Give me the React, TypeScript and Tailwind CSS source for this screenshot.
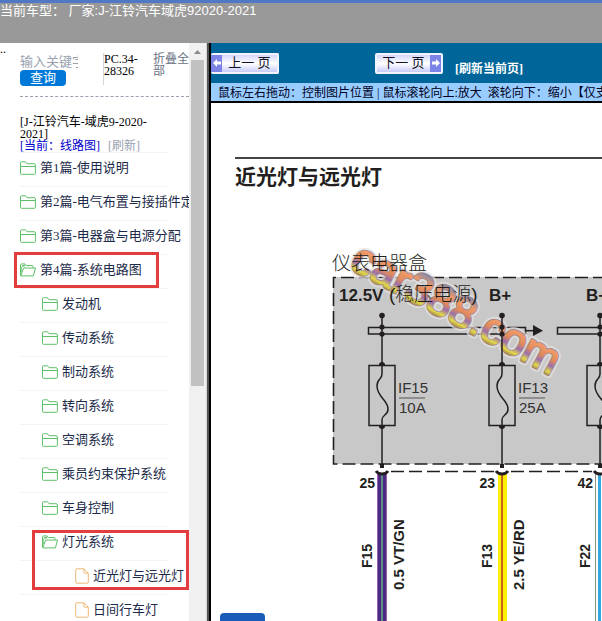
import { clsx } from "clsx";
import type { ReactNode } from "react";

type TreeNode = {
  label: string;
  kind?: "folder" | "file";
  open?: boolean;
  children?: TreeNode[];
};

const tree: TreeNode[] = [
  { label: "第1篇-使用说明" },
  { label: "第2篇-电气布置与接插件定" },
  { label: "第3篇-电器盒与电源分配" },
  {
    label: "第4篇-系统电路图",
    open: true,
    children: [
      { label: "发动机" },
      { label: "传动系统" },
      { label: "制动系统" },
      { label: "转向系统" },
      { label: "空调系统" },
      { label: "乘员约束保护系统" },
      { label: "车身控制" },
      {
        label: "灯光系统",
        open: true,
        children: [
          { label: "近光灯与远光灯", kind: "file" },
          { label: "日间行车灯", kind: "file" },
        ],
      },
    ],
  },
];

const indents = ["pl-0", "pl-[22px]", "pl-[55px]"];

function FolderIcon({ open }: { open?: boolean }) {
  return (
    <svg width="16" height="14" viewBox="0 0 16 14" fill="none" stroke="#5fc06a">
      {open ? (
        <>
          <path d="M.5 12.5V2Q.5.9 1.6.9H5l1.4 1.6H12q1 0 1 1V5" />
          <path d="M.8 12.9 3.6 5H15.5l-2.1 7.9Z" strokeLinejoin="round" />
          <path d="M1 9V3.5M2 3l3-.5" strokeWidth="1.4" />
        </>
      ) : (
        <>
          <path d="M.5 12.4V1.8Q.5.8 1.5.8H5.6L7 2.7h7q1.4 0 1.4 1.2v8.5q0 .9-1 .9H1.5q-1 0-1-.9Z" />
          <path d="M.5 5.5h15" />
        </>
      )}
    </svg>
  );
}

function FileIcon() {
  return (
    <svg width="14" height="16" viewBox="0 0 14 16" fill="none" stroke="#f0b878">
      <path d="M8.8.8H2Q.7.8.7 2v12q0 1.2 1.3 1.2h10q1.3 0 1.3-1.2V5.2Z" />
      <path d="M8.8.8V4q0 1.2 1.2 1.2h3.3" />
    </svg>
  );
}

function TreeItem({ node, level }: { node: TreeNode; level: number }) {
  const isGroup = level === 1 && node.open;
  return (
    <li className="relative">
      <a
        href="#"
        className={clsx(
          "flex h-[34px] w-[149px] items-center gap-1 border-t border-gray-100 pb-1 text-[13px] leading-4 whitespace-nowrap text-[#1c2b4a]",
          indents[level]
        )}
      >
        <span className="shrink-0">
          {node.kind === "file" ? <FileIcon /> : <FolderIcon open={node.open} />}
        </span>
        <span>{node.label}</span>
      </a>
      {level === 0 && node.open && (
        <span className="pointer-events-none absolute -top-0.5 -left-1.5 h-9 w-[145px] border-3 border-[#e33e3e]" />
      )}
      {isGroup && (
        <span className="pointer-events-none absolute top-1 left-3 z-10 h-[60px] w-[157px] border-3 border-[#e33e3e]" />
      )}
      {node.children && (
        <ul>
          {node.children.map((child) => (
            <TreeItem key={child.label} node={child} level={level + 1} />
          ))}
        </ul>
      )}
    </li>
  );
}

function Sidebar() {
  return (
    <aside className="flex shrink-0">
      <div className="flex w-[189px] overflow-hidden">
        <span className="w-5 shrink-0 text-xs leading-3">..</span>
        <div className="w-[169px] shrink-0">
          <form className="flex items-start border-b border-dashed border-gray-400 py-[10px]">
            <div className="w-[83px]">
              <input
                aria-label="输入关键字"
                placeholder="输入关键字"
                className="block h-[17px] w-[58px] text-[13px] placeholder:text-gray-400"
              />
              <button
                type="button"
                className="block h-4 w-[46px] rounded bg-[#0078d7] text-[13px] leading-4 text-white"
              >
                查询
              </button>
            </div>
            <div className="h-8 w-[50px] border-l border-gray-300 text-xs leading-3">
              PC.34-
              <br />
              28326
            </div>
            <a href="#" className="w-9 text-xs leading-3 text-gray-500">
              折叠全部
            </a>
          </form>
          <div className="pt-[19px] text-xs leading-3">
            <p>
              [J-江铃汽车-域虎9-2020-
              <br />
              2021]
            </p>
            <p className="flex gap-2">
              <a href="#" className="text-[#0000cc]">
                [当前：线路图]
              </a>
              <a href="#" className="text-gray-400">
                [刷新]
              </a>
            </p>
          </div>
          <ul>
            {tree.map((node) => (
              <TreeItem key={node.label} node={node} level={0} />
            ))}
          </ul>
        </div>
      </div>
      <div className="flex w-[17px] flex-col items-center bg-[#f0f0f0]">
        <div className="flex h-[17px] items-center">
          <svg width="7" height="4" viewBox="0 0 7 4" fill="#8a8a8a">
            <path d="M3.5 0 7 4H0Z" />
          </svg>
        </div>
        <div className="h-[326px] w-[13px] bg-[#c1c1c1]" />
      </div>
      <div className="w-[5px] border-r-2 border-l border-l-gray-300 border-r-black bg-[#555]" />
    </aside>
  );
}

function PageArrow({ back }: { back?: boolean }) {
  return (
    <span className="flex h-full w-[11px] items-center justify-center bg-[#7b83e6]">
      <svg width="8" height="8" viewBox="0 0 8 8" fill="white">
        {back ? <path d="M0 4 4 0V2.6H8V5.4H4V8Z" /> : <path d="M8 4 4 0V2.6H0V5.4H4V8Z" />}
      </svg>
    </span>
  );
}

function PageButton({ back, children }: { back?: boolean; children: ReactNode }) {
  return (
    <button
      type="button"
      className={clsx(
        "flex h-[21px] w-[68px] items-center rounded-xs border-[#f3f3ff] bg-linear-to-b from-[#d5d7fa] via-white to-[#c9ccf8] text-[13px] text-[#111122]",
        back ? "border-y-2 border-r-2" : "border-2"
      )}
    >
      {back && <PageArrow back />}
      <span className="flex-1">{children}</span>
      {!back && <PageArrow />}
    </button>
  );
}

function Fuse({ x, name, amps }: { x: number; name: string; amps: string }) {
  return (
    <g>
      <path
        d={`M${x} 315V366M${x} 425V468M${x} 365V374C${x} 380 ${x - 5} 378 ${x - 5} 386C${x - 5} 397 ${x + 6} 400 ${x + 6} 409C${x + 6} 416 ${x} 414 ${x} 420V426`}
        fill="none"
        stroke="#231f20"
        strokeWidth="1.5"
      />
      <rect x={x - 13} y="365.5" width="26" height="60" fill="none" stroke="#231f20" strokeWidth="1.5" />
      <circle cx={x} cy="315.5" r="2.8" />
      <circle cx={x} cy="327" r="2.6" />
      <circle cx={x} cy="334" r="2.6" />
      <path d={`M${x - 3} 365a3 3 0 0 1 6 0ZM${x - 3} 426a3 3 0 0 0 6 0Z`} />
      <g fontSize="15" fill="#333">
        <text x={x + 16} y="393">{name}</text>
        <text x={x + 17} y="413">{amps}</text>
      </g>
      <path d={`M${x + 17} 398H${x + 43}`} stroke="#555" />
    </g>
  );
}

function Connector({ x, pin, wire, gauge }: { x: number; pin: string; wire: string; gauge: string }) {
  return (
    <g fontSize="14" fontWeight="bold">
      <path d={`M${x} 464V468`} stroke="#231f20" strokeWidth="4" />
      <path d={`M${x - 6} 471Q${x - 4} 474 ${x} 474T${x + 6} 471`} fill="none" stroke="#231f20" strokeWidth="3" />
      <text x={x - 7} y="488" textAnchor="end">{pin}</text>
      <text transform={`translate(${x - 10} 568) rotate(-90)`}>{wire}</text>
      <text transform={`translate(${x + 22} 590) rotate(-90)`} fontSize="15">{gauge}</text>
    </g>
  );
}

function Diagram() {
  return (
    <svg
      width="449"
      height="421"
      viewBox="211 200 449 421"
      className="block max-w-none"
      fill="#231f20"
      fontFamily="'Liberation Sans', 'Noto Sans CJK SC', sans-serif"
    >
      <defs>
        <linearGradient id="mark" gradientUnits="userSpaceOnUse" x1="0" y1="-31" x2="0" y2="2">
          <stop offset="0" stopColor="#8a8aa8" />
          <stop offset="0.25" stopColor="#f09a68" />
          <stop offset="0.5" stopColor="#e08a5c" />
          <stop offset="0.68" stopColor="#9a6fae" />
          <stop offset="0.86" stopColor="#e3da48" />
          <stop offset="1" stopColor="#9a7a58" />
        </linearGradient>
      </defs>

      <rect x="333" y="277" width="327" height="187" fill="#c8c8c8" />
      <path d="M660 277.500H333.500V464H660" fill="none" stroke="#231f20" strokeWidth="1.6" strokeDasharray="13 5" />
      <path d="M391 471.500H494M511 471.500H592" stroke="#231f20" strokeWidth="1.5" strokeDasharray="13 5" />

      <g fill="none" stroke="#231f20" strokeWidth="1.5">
        <rect x="368.500" y="327.500" width="157" height="6.500" />
        <path d="M660 327.500H557.500V334H660" />
        <path d="M526 330.700H535" />
      </g>
      <path d="M533 325 543 330.700 533 336Z" />

      {/* site watermark */}
      <g transform="translate(348 268) rotate(28)" fontSize="44" strokeLinejoin="round">
        <text stroke="#e6e2e2" strokeWidth="7" fill="none" opacity="0.7">
          car388.com
        </text>
        <text stroke="#8c7078" strokeWidth="3" fill="none" opacity="0.8">
          car388.com
        </text>
        <text fill="url(#mark)" stroke="url(#mark)" strokeWidth="1.5">
          car388.com
        </text>
      </g>

      <text x="332" y="270" fontSize="19" fontWeight="300">仪表电器盒</text>
      <g fontSize="17" fontWeight="bold">
        <text x="339" y="301">12.5V</text>
        <text x="489" y="301">B+</text>
        <text x="586" y="301">B+</text>
      </g>
      <text x="389" y="301" fontSize="19" fontWeight="300">(稳压电源)</text>

      <Fuse x={382} name="IF15" amps="10A" />
      <Fuse x={502} name="IF13" amps="25A" />
      <Fuse x={600} name="IF22" amps="10A" />

      <g>
        <rect x="377" y="473" width="10" height="148" fill="#9b63ad" />
        <rect x="378" y="473" width="8" height="148" fill="#4b2a82" />
        <rect x="381" y="473" width="2" height="148" fill="#5d8f86" />
        <rect x="498" y="473" width="9" height="148" fill="#fff100" />
        <rect x="501" y="473" width="2" height="148" fill="#c9661d" />
        <rect x="595" y="473" width="1" height="148" fill="#8a9385" />
        <rect x="598" y="473" width="3" height="148" fill="#35a8e0" />
        <rect x="603" y="473" width="1" height="148" fill="#8a9385" />
      </g>

      <Connector x={382} pin="25" wire="F15" gauge="0.5 VT/GN" />
      <Connector x={502} pin="23" wire="F13" gauge="2.5 YE/RD" />
      <Connector x={600} pin="42" wire="F22" gauge="0.5 WH/BU" />
    </svg>
  );
}

function Viewer() {
  return (
    <main className="relative flex min-w-0 flex-1 flex-col overflow-hidden">
      <div className="flex h-10 shrink-0 items-center bg-[#006699]">
        <PageButton back>上一 页</PageButton>
        <div className="ml-24 flex items-center gap-3">
          <PageButton>下一 页</PageButton>
          <a href="#" className="pt-3 text-xs font-bold whitespace-nowrap text-white">
            [刷新当前页]
          </a>
        </div>
      </div>
      <p className="h-5 shrink-0 overflow-hidden border-b-2 border-black bg-[#99ccff] pl-[7px] text-xs leading-5 whitespace-pre text-[#000022]">
        鼠标左右拖动：控制图片位置 | 鼠标滚轮向上:放大{"  "}滚轮向下：缩小【仅支
      </p>
      <div className="flex-1 overflow-hidden bg-white pt-[54px]">
        <h1 className="ml-6 h-[43px] border-t-2 border-[#444] pt-1 text-[21px] leading-7 font-bold whitespace-nowrap text-[#231f20]">
          近光灯与远光灯
        </h1>
        <Diagram />
      </div>
      <div className="absolute bottom-0 left-[9px] h-2 w-[45px] rounded-t bg-[#1b5bb8]" />
    </main>
  );
}

export default function App() {
  return (
    <div className="flex h-screen flex-col overflow-hidden bg-white font-['Liberation_Serif','Noto_Sans_CJK_SC',serif] text-black">
      <header className="h-[43px] shrink-0 border-t-3 border-[#5078c4] bg-[#999999] font-['Liberation_Sans','Noto_Sans_CJK_SC',sans-serif] text-[13px] leading-4 whitespace-pre text-white">
        当前车型： 厂家:J-江铃汽车域虎92020-2021
      </header>
      <div className="flex min-h-0 flex-1">
        <Sidebar />
        <Viewer />
      </div>
    </div>
  );
}
